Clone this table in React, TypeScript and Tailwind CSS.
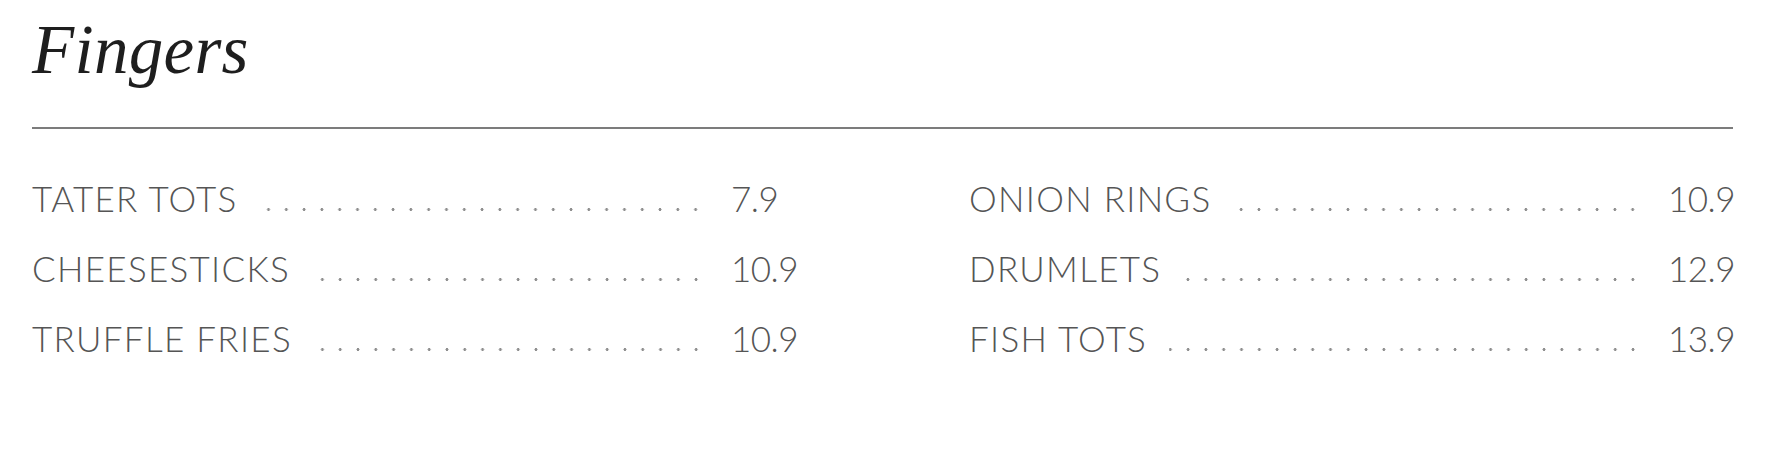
import React from "react";

type Item = { name: string; price: string };

const left: Item[] = [
  { name: "TATER TOTS", price: "7.9" },
  { name: "CHEESESTICKS", price: "10.9" },
  { name: "TRUFFLE FRIES", price: "10.9" },
];

const right: Item[] = [
  { name: "ONION RINGS", price: "10.9" },
  { name: "DRUMLETS", price: "12.9" },
  { name: "FISH TOTS", price: "13.9" },
];

function Row({ item }: { item: Item }) {
  return (
    <div className="flex items-baseline h-[70px] leading-[70px]">
      <span className="whitespace-nowrap">{item.name}</span>
      <span className="flex-1 ml-[22px] mr-[26px] h-[5px] bg-[radial-gradient(circle,#8e8e8e_1.2px,transparent_1.8px)] bg-[length:17.8px_5px] bg-repeat-x bg-right" />
      <span className="w-[65px] whitespace-nowrap tracking-[-0.5px]">{item.price}</span>
    </div>
  );
}

export default function App() {
  return (
    <div className="w-[1774px] h-[452px] bg-white pl-[32px] pr-[41px] pt-[16px]">
      <h2 className="font-['Liberation_Serif',serif] italic text-[69px] leading-none text-[#1e1e1e] font-normal tracking-[0.3px]">
        Fingers
      </h2>
      <div className="mt-[42px] h-[2px] bg-[#7c7c7c]" />
      <div className="mt-[34px] grid grid-cols-2 gap-x-[173px] font-['Lato',sans-serif] font-light text-[35px] tracking-[1.3px] text-[#555555]">
        <div className="flex flex-col">
          {left.map((it) => (
            <Row key={it.name} item={it} />
          ))}
        </div>
        <div className="flex flex-col">
          {right.map((it) => (
            <Row key={it.name} item={it} />
          ))}
        </div>
      </div>
    </div>
  );
}
